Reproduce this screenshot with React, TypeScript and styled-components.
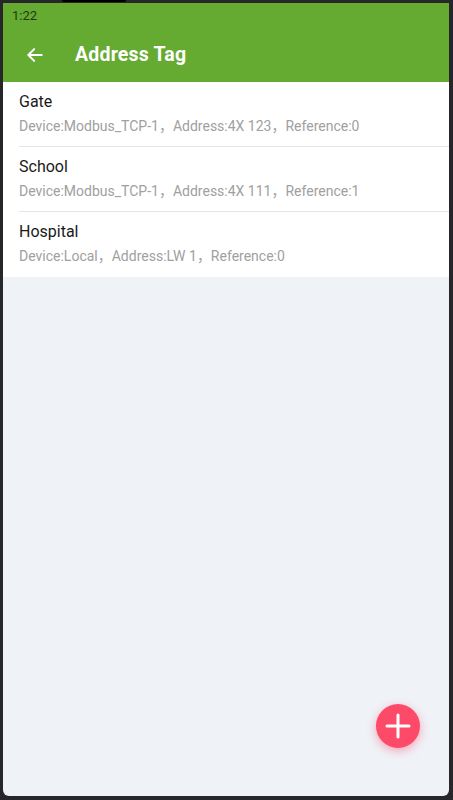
import {FC} from "react";
import styled, {createGlobalStyle} from "styled-components";

const GlobalStyle = createGlobalStyle`
    html, body {
        margin: 0;
        padding: 0;
        background: #26262b;
    }
    * {
        box-sizing: border-box;
    }
`;

interface TagItem {
    name: string
    device: string
    address: string
    reference: number
}

const tags: TagItem[] = [
    {name: "Gate", device: "Modbus_TCP-1", address: "4X 123", reference: 0},
    {name: "School", device: "Modbus_TCP-1", address: "4X 111", reference: 1},
    {name: "Hospital", device: "Local", address: "LW 1", reference: 0},
];

const Frame = styled.div`
    position: relative;
    width: 453px;
    height: 800px;
    padding: 3px 4px 4px 3px;
    background: #26262b;
    font-family: Roboto, "Noto Sans CJK SC", sans-serif;

    &::before {
        content: "";
        position: absolute;
        top: 0;
        left: 62px;
        width: 64px;
        height: 2px;
        background: #000;
        border-radius: 0 0 2px 2px;
    }
`;

const Screen = styled.div`
    position: relative;
    display: flex;
    flex-direction: column;
    height: 100%;
    background: #eff2f7;
    border-radius: 0 0 6px 6px;
    overflow: hidden;
`;

const Header = styled.header`
    background: #65aa31;
    color: #fff;
`;

const StatusBar = styled.div`
    height: 24px;
    padding: 5px 0 0 9px;
    font-size: 13px;
    color: #1f3a12;
`;

const Toolbar = styled.div`
    height: 55px;
    display: flex;
    align-items: center;
    padding-left: 22px;
    gap: 30px;
`;

const BackButton = styled.button`
    display: flex;
    padding: 0;
    border: none;
    background: none;
    color: #fff;
`;

const Title = styled.h1`
    margin: 0;
    font-size: 19.5px;
    font-weight: 700;
    letter-spacing: 0.2px;
`;

const List = styled.ul`
    list-style: none;
    margin: 0;
    padding: 0 0 1px;
    background: #fff;
`;

const Row = styled.li`
    padding: 9px 16px 10px;
    display: flex;
    flex-direction: column;
    gap: 3px;

    & + & {
        border-top: 1px solid #e5e5e5;
        margin-left: 16px;
        padding-left: 0;
    }
`;

const RowTitle = styled.div`
    font-size: 16px;
    line-height: 22px;
    color: #1a1a1a;
`;

const RowSub = styled.div`
    font-size: 14px;
    line-height: 20px;
    color: #a0a0a0;
`;

const Fab = styled.button`
    position: absolute;
    right: 29px;
    bottom: 48px;
    width: 44px;
    height: 44px;
    border-radius: 50%;
    border: none;
    padding: 0;
    background: #fd4a69;
    color: #fff;
    display: flex;
    align-items: center;
    justify-content: center;
    box-shadow: 0 3px 10px rgba(253, 74, 105, 0.45);
`;

const App: FC = () => {
    return (
        <>
            <GlobalStyle/>
            <Frame>
                <Screen>
                    <Header>
                        <StatusBar>1:22</StatusBar>
                        <Toolbar>
                            <BackButton>
                                <svg width="20" height="20" viewBox="0 0 24 24" fill="none" stroke="currentColor"
                                     strokeWidth="2.4" strokeLinecap="round" strokeLinejoin="round">
                                    <path d="M20 12H4.5"/>
                                    <path d="M11 5l-7 7 7 7"/>
                                </svg>
                            </BackButton>
                            <Title>Address Tag</Title>
                        </Toolbar>
                    </Header>
                    <List>
                        {tags.map((tag) => (
                            <Row key={tag.name}>
                                <RowTitle>{tag.name}</RowTitle>
                                <RowSub>
                                    Device:{tag.device}，Address:{tag.address}，Reference:{tag.reference}
                                </RowSub>
                            </Row>
                        ))}
                    </List>
                    <Fab>
                        <svg width="28" height="28" viewBox="0 0 28 28" stroke="currentColor" strokeWidth="3"
                             strokeLinecap="round">
                            <path d="M14 3v22M3 14h22"/>
                        </svg>
                    </Fab>
                </Screen>
            </Frame>
        </>
    );
};

export default App;
